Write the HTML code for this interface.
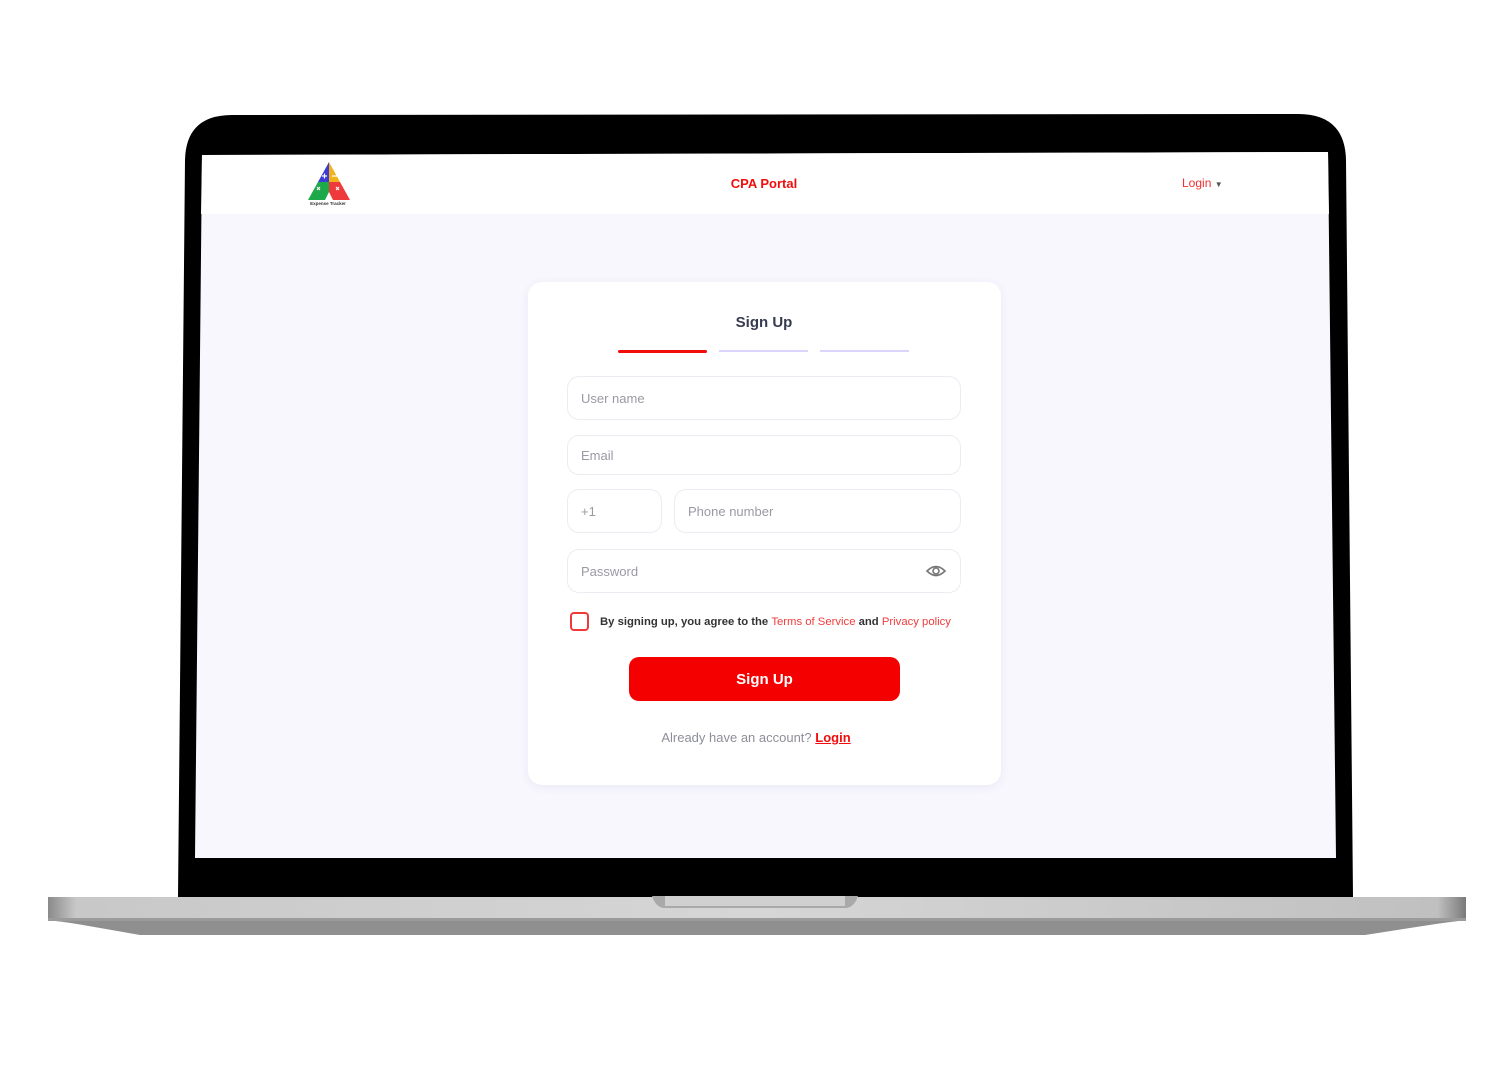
<!DOCTYPE html>
<html><head><meta charset="utf-8"><style>
body{margin:0;width:1511px;height:1068px;background:#fff;position:relative;overflow:hidden;font-family:"Liberation Sans",sans-serif}
.a{position:absolute}
.inp{position:absolute;background:#fff;border:1px solid #ececf3;border-radius:12px;box-sizing:border-box;color:#9a9aa5;font-size:13px;padding-left:13px;display:flex;align-items:center}
</style></head><body>
<svg class="a" style="left:0;top:0" width="1511" height="1068">
<defs>
<linearGradient id="b2" x1="0" y1="0" x2="1" y2="0"><stop offset="0" stop-color="#8a8a8a"/><stop offset="0.02" stop-color="#c8c8c8"/><stop offset="0.5" stop-color="#d6d6d6"/><stop offset="0.98" stop-color="#c0c0c0"/><stop offset="1" stop-color="#7a7a7a"/></linearGradient>
</defs>
<path d="M185 160 Q186 115 232 115 L1298 114 Q1345 114 1346 160 L1353 897 L178 897 Z" fill="#000"/>
<path d="M202 155 L1328 152 L1336 858 L195 858 Z" fill="#f8f7fe"/>
<path d="M202 155 L1328 152 L1329 214 L201 214 Z" fill="#fff"/>
<path d="M48 897 L1466 897 L1466 920 L1360 934 L150 934 L48 920 Z" fill="url(#b2)"/>
<rect x="48" y="918" width="1418" height="3" fill="#9b9b9b"/>
<path d="M60 921 L1455 921 L1365 935 L140 935 Z" fill="#8f8f8f"/>
<path d="M652 896 L858 896 Q854 908 845 908 L665 908 Q656 908 652 896Z" fill="#a9a9a9"/>
<rect x="665" y="896" width="180" height="10" fill="#d0d0d0"/>
<polygon points="329,162 318,182 329,182" fill="#3b3bd8"/>
<polygon points="329,162 340,182 329,182" fill="#f2b21a"/>
<polygon points="318,182 308,200 329,200 329,182" fill="#1da84a"/>
<polygon points="340,182 350,200 329,200 329,182" fill="#ee3a3a"/>
<polygon points="329,192 325,200 333,200" fill="#fff"/>
<path d="M322 176h5M324.5 173.5v5M332 176h5M317 187l3 3M320 187l-3 3M336 187l3 3M339 187l-3 3" stroke="#fff" stroke-width="1.2"/>
<text x="328" y="205" font-size="4.5" font-weight="bold" text-anchor="middle" fill="#333">Expense Tracker</text>
</svg>
<div class="a" style="left:700px;top:176px;width:128px;text-align:center;color:#f20d0d;font-size:13px;font-weight:bold">CPA Portal</div>
<div class="a" style="left:1182px;top:176px;color:#f0302f;font-size:12px">Login <span style="color:#555;font-size:8px">▼</span></div>
<div class="a" style="left:528px;top:282px;width:473px;height:503px;background:#fff;border-radius:14px;box-shadow:0 2px 10px rgba(60,60,120,0.07)"></div>
<div class="a" style="left:664px;top:314px;width:200px;text-align:center;color:#363b4f;font-size:15px;font-weight:bold">Sign Up</div>
<div class="a" style="left:618px;top:350px;width:89px;height:3px;background:#f20d0d;border-radius:2px"></div>
<div class="a" style="left:719px;top:350px;width:89px;height:2px;background:#d9d5fb"></div>
<div class="a" style="left:820px;top:350px;width:89px;height:2px;background:#d9d5fb"></div>
<div class="inp" style="left:567px;top:376px;width:394px;height:44px">User name</div>
<div class="inp" style="left:567px;top:435px;width:394px;height:40px">Email</div>
<div class="inp" style="left:567px;top:489px;width:95px;height:44px">+1</div>
<div class="inp" style="left:674px;top:489px;width:287px;height:44px">Phone number</div>
<div class="inp" style="left:567px;top:549px;width:394px;height:44px">Password</div>
<svg class="a" style="left:926px;top:563px" width="20" height="16" viewBox="0 0 20 16"><path d="M1 8 Q10 -1 19 8 Q10 17 1 8Z" fill="none" stroke="#777" stroke-width="1.6"/><circle cx="10" cy="8" r="3" fill="none" stroke="#777" stroke-width="1.6"/></svg>
<div class="a" style="left:570px;top:612px;width:19px;height:19px;border:2px solid #f03a3a;border-radius:4px;box-sizing:border-box"></div>
<div class="a" style="left:600px;top:616px;font-size:11.3px;font-weight:bold;color:#333;white-space:nowrap">By signing up, you agree to the <span style="color:#f23b3b;font-weight:normal">Terms of Service</span> and <span style="color:#f23b3b;font-weight:normal">Privacy policy</span></div>
<div class="a" style="left:629px;top:657px;width:271px;height:44px;background:#f50000;border-radius:10px;color:#fff;font-size:15px;font-weight:bold;display:flex;align-items:center;justify-content:center">Sign Up</div>
<div class="a" style="left:600px;top:730px;width:312px;text-align:center;font-size:13px;color:#8e8e99">Already have an account? <span style="color:#f20d0d;font-weight:bold;text-decoration:underline">Login</span></div>
</body></html>
